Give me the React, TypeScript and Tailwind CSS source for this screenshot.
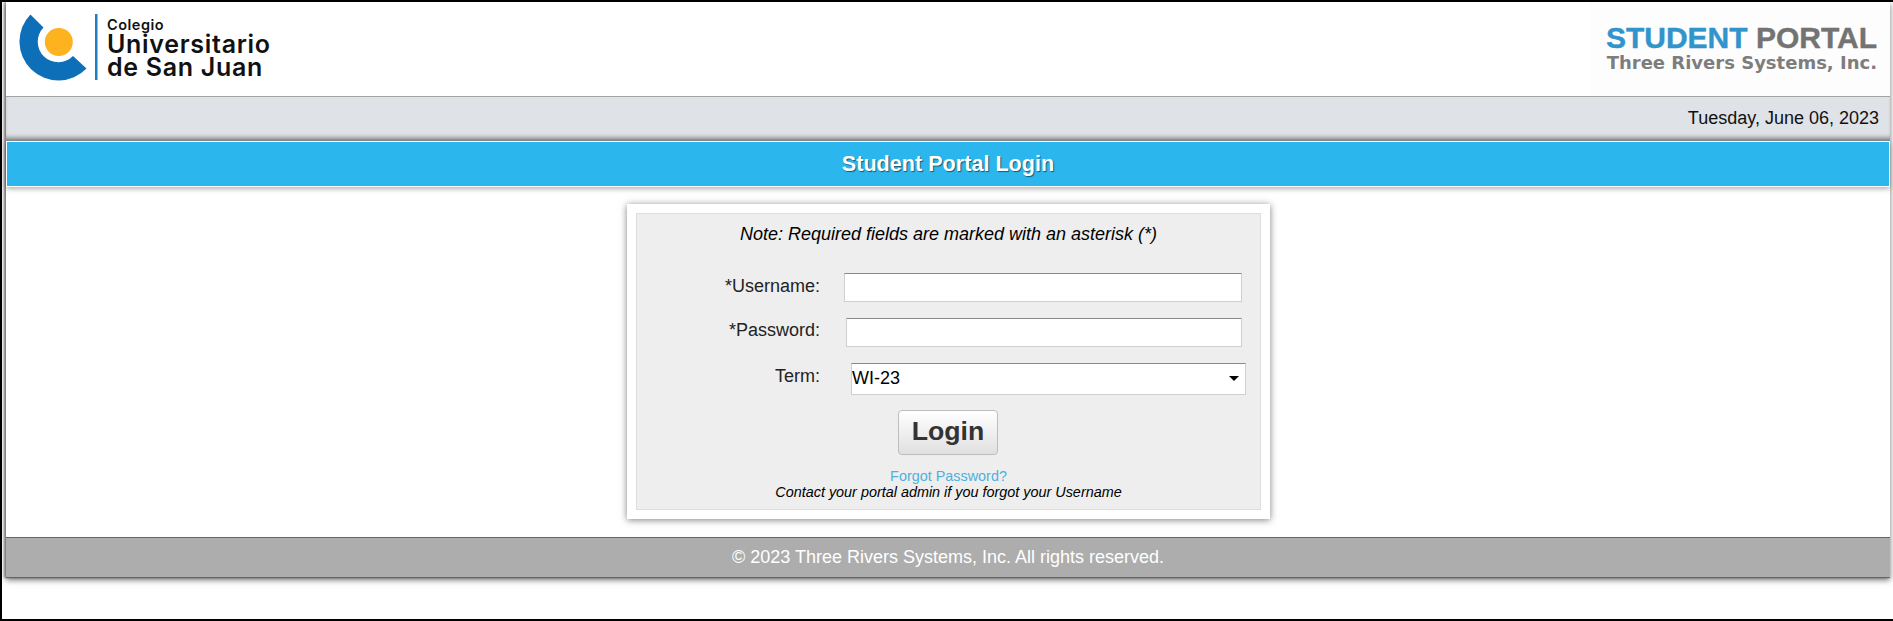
export default function App() {
  return (
    <div className="h-[621px] overflow-hidden bg-white border-t-2 border-b-2 border-l-2 border-black pl-1 pr-[3px] font-['Liberation_Sans',Arial,sans-serif] text-black">
      <div className="bg-white shadow-[0_2px_6px_rgba(0,0,0,0.55),-2px_0_2px_rgba(0,0,0,0.35)]">
        <header className="h-[94px] flex items-start justify-between">
          <div className="flex items-start">
            <svg width="94" height="94" viewBox="6 2 94 94" className="shrink-0">
              <path
                d="M30.4 14.4 L43.5 27.5 A20.5 20.5 0 1 0 73 56 L86.5 68.6 A39 39 0 1 1 30.4 14.4 Z"
                fill="#0c6fb8"
              />
              <circle cx="58.8" cy="42" r="14" fill="#fdb21f" />
              <rect x="95" y="14" width="2.5" height="66" fill="#1f7fc0" />
            </svg>
            <div className="ml-[7px] pt-[14px] font-['Inter',sans-serif] font-semibold text-[#111]">
              <div className="text-[14.5px] leading-[17px] tracking-[0.5px]">Colegio</div>
              <div className="text-[25px] leading-[22px] tracking-[0.7px]">Universitario</div>
              <div className="text-[25px] leading-[24px] tracking-[0.7px]">de San Juan</div>
            </div>
          </div>
          <div className="w-[300px] h-[94px] bg-[#fdfdfd] flex flex-col items-end pr-[13px] pt-[22px]">
            <div className="text-[30px] leading-[28px] font-bold [-webkit-text-stroke:0.4px]">
              <span className="text-[#3194cb]">STUDENT</span> <span className="text-[#737373]">PORTAL</span>
            </div>
            <div className="font-['DejaVu_Sans',sans-serif] text-[18px] leading-[22px] font-bold text-[#7d7d7d]">
              Three Rivers Systems, Inc.
            </div>
          </div>
        </header>

        <div className="h-[45px] border-t border-[#a3a3a3] bg-[#dfe2e7] flex items-center justify-end pr-[11px] pb-[3px] text-lg text-[#111] shadow-[inset_0_-6px_5px_-3px_rgba(0,0,0,0.45)]">
          Tuesday, June 06, 2023
        </div>

        <div className="h-[46px] border border-white bg-[#2bb6ee] flex items-center justify-center text-[21.6px] font-bold text-white [text-shadow:1px_1px_1px_rgba(0,0,0,0.5)] shadow-[0_2px_5px_rgba(0,0,0,0.3)]">
          Student Portal Login
        </div>

        <main className="flex justify-center pt-[17px] pb-[18px]">
          <div className="ml-[1px] w-[643px] h-[315px] bg-white p-[9px] shadow-[0_1px_7px_rgba(0,0,0,0.5)]">
            <form className="h-full border border-[#dddddd] bg-[#eeeeee] flex flex-col">
              <p className="mt-[10px] text-center text-lg italic leading-[20px]">
                Note: Required fields are marked with an asterisk (*)
              </p>

              <div className="mt-[29px] flex items-start h-[29px]">
                <label className="w-[183px] text-right text-lg text-[#222] leading-[26px]">*Username:</label>
                <input className="ml-[24px] w-[398px] h-[29px] bg-white border border-[#cfcfcf] border-t-[#8a8a8a]" />
              </div>
              <div className="mt-[16px] flex items-start h-[29px]">
                <label className="w-[183px] text-right text-lg text-[#222] leading-[24px]">*Password:</label>
                <input
                  type="password"
                  className="ml-[26px] w-[396px] h-[29px] bg-white border border-[#cfcfcf] border-t-[#8a8a8a]"
                />
              </div>
              <div className="mt-[16px] flex items-start h-[32px]">
                <label className="w-[183px] text-right text-lg text-[#222] leading-[26px]">Term:</label>
                <div className="relative ml-[31px] w-[395px] h-[32px] bg-white border border-[#cfcfcf] border-t-[#8a8a8a] flex items-center text-lg pb-[2px]">
                  WI-23
                  <span className="absolute right-[6px] top-[12px] w-0 h-0 border-x-[5.5px] border-x-transparent border-t-[5px] border-t-black" />
                </div>
              </div>

              <button
                type="button"
                className="mt-[15px] self-center ml-[-1px] w-[100px] h-[45px] rounded-[4px] border border-[#bdbdbd] bg-gradient-to-b from-white to-[#e0e0e0] text-[26.67px] font-bold text-[#333] pb-[3px]"
              >
                Login
              </button>

              <a className="mt-[13px] text-center text-[14.4px] leading-[16px] text-[#4db1dd]">Forgot Password?</a>
              <p className="text-center text-[14.4px] leading-[16px] italic">
                Contact your portal admin if you forgot your Username
              </p>
            </form>
          </div>
        </main>

        <footer className="h-[41px] border-y border-[#666666] bg-[#adadad] flex items-center justify-center text-lg text-white pb-[2px]">
          © 2023 Three Rivers Systems, Inc. All rights reserved.
        </footer>
      </div>
    </div>
  );
}
